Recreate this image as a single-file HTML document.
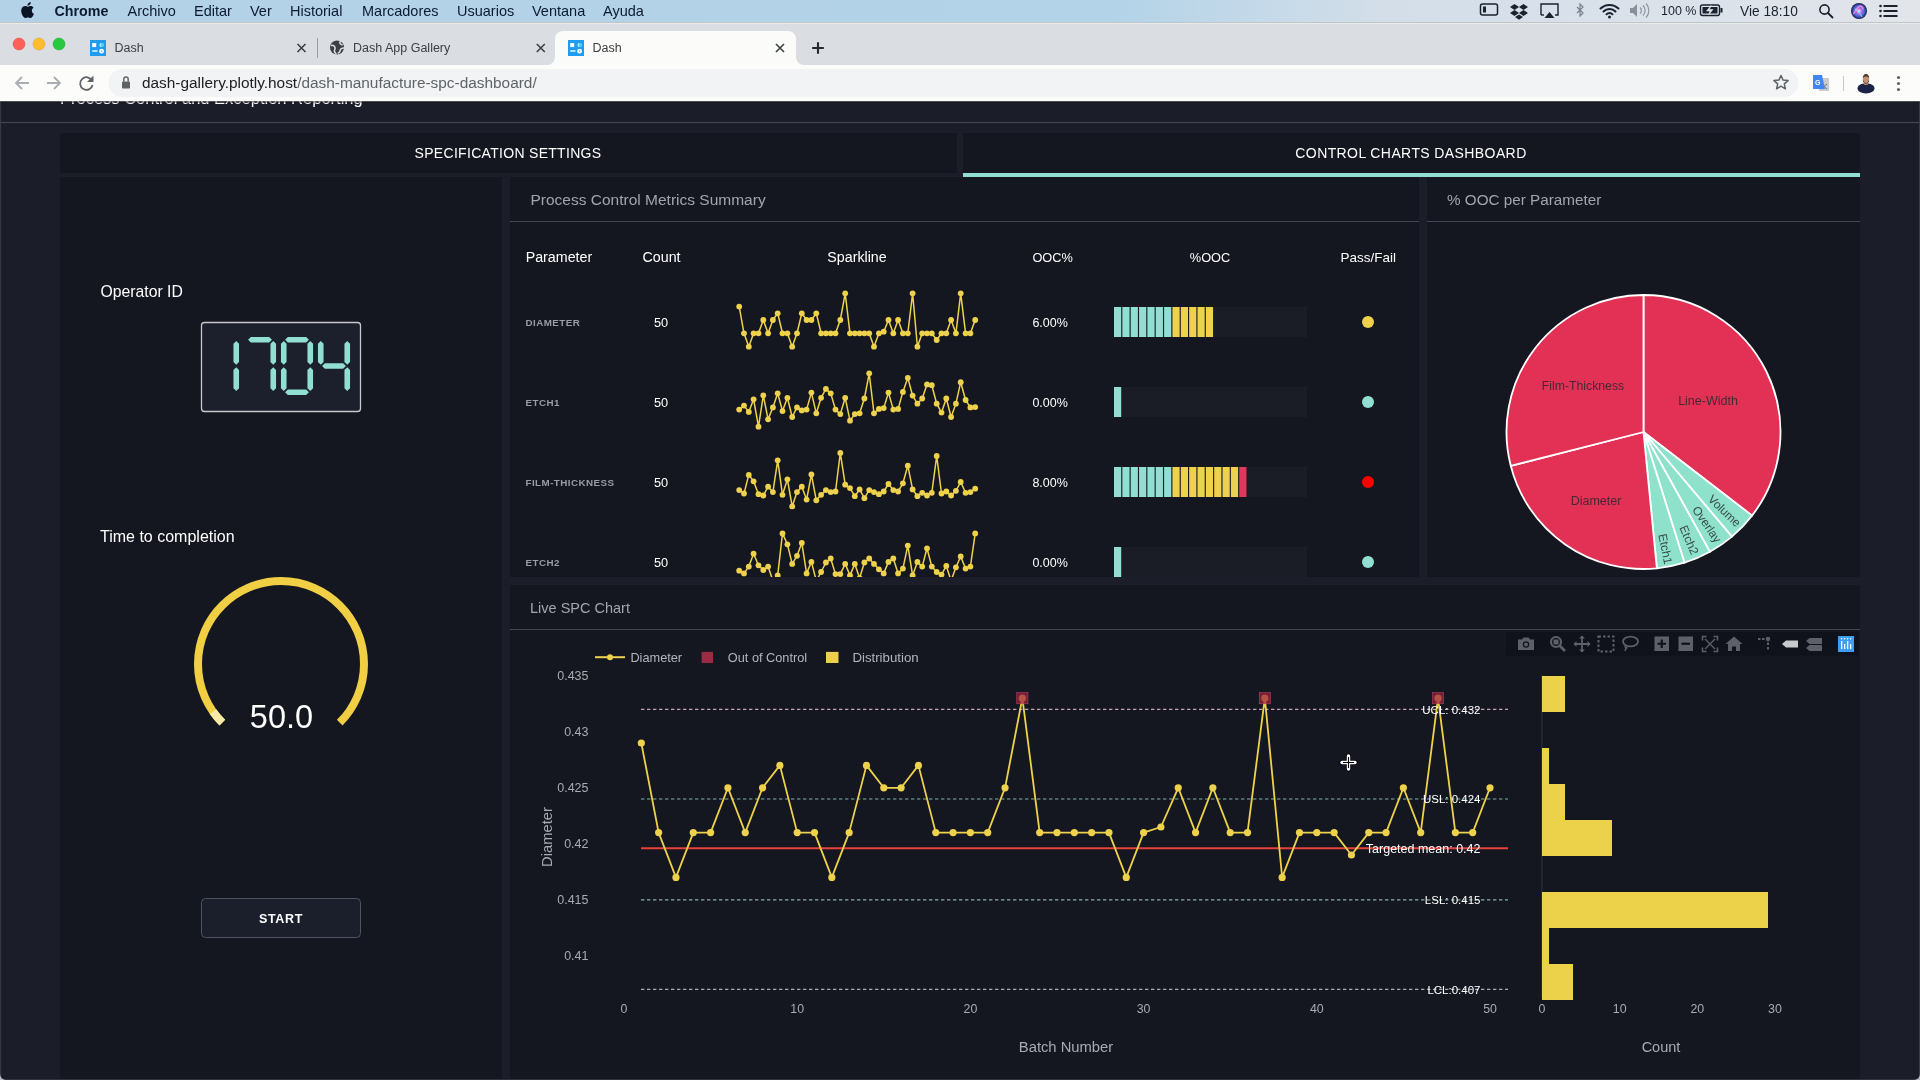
<!DOCTYPE html>
<html><head><meta charset="utf-8"><title>Dash</title>
<style>html,body{margin:0;padding:0;width:1920px;height:1080px;overflow:hidden;background:#1b1d28;}
svg{display:block;font-family:"Liberation Sans", sans-serif;will-change:transform;}</style></head>
<body><svg width="1920" height="1080" viewBox="0 0 1920 1080">
<rect x="0" y="101" width="1920" height="979" fill="#1b1d28"/>
<clipPath id="pg"><rect x="0" y="101" width="1920" height="979"/></clipPath>
<g clip-path="url(#pg)">
<text x="60" y="103.8" font-size="16.5" fill="#ffffff">Process Control and Exception Reporting</text>
</g>
<rect x="0" y="122" width="1920" height="1" fill="#454854"/>
<rect x="60" y="133" width="897" height="40" fill="#151720"/>
<rect x="963" y="133" width="897" height="40" fill="#151720"/>
<rect x="963" y="173" width="897" height="4" fill="#91dfd2"/>
<text x="508" y="158" font-size="14" fill="#ffffff" text-anchor="middle" letter-spacing="0.3">SPECIFICATION SETTINGS</text>
<text x="1411" y="158" font-size="14" fill="#ffffff" text-anchor="middle" letter-spacing="0.4">CONTROL CHARTS DASHBOARD</text>
<rect x="60" y="177" width="442" height="903" fill="#151720"/>
<rect x="510" y="177" width="909" height="400" fill="#151720"/>
<rect x="1427" y="177" width="433" height="400" fill="#151720"/>
<rect x="510" y="585" width="1350" height="495" fill="#151720"/>
<rect x="510" y="221" width="909" height="1" fill="#454854"/>
<rect x="1427" y="221" width="433" height="1" fill="#454854"/>
<rect x="510" y="629" width="1350" height="1" fill="#454854"/>
<text x="530.5" y="205" font-size="15.5" fill="#a2a5ad">Process Control Metrics Summary</text>
<text x="1447" y="205" font-size="15.25" fill="#a2a5ad">% OOC per Parameter</text>
<text x="530" y="613" font-size="14.5" fill="#a2a5ad">Live SPC Chart</text>
<rect x="1919" y="101" width="1" height="979" fill="#3a3d48"/>
<rect x="0" y="101" width="1.2" height="979" fill="#363944"/>
<rect x="0" y="1079" width="1920" height="1" fill="#30333d"/>
<path d="M0 1074v6h6a6 6 0 0 1 -6 -6z" fill="#b8bcc4"/><path d="M1920 1074v6h-6a6 6 0 0 0 6 -6z" fill="#b8bcc4"/>
<text x="100.5" y="296.5" font-size="15.75" fill="#ffffff">Operator ID</text>
<rect x="201.5" y="322.5" width="159" height="89" rx="3" fill="#1c1f2c" stroke="#c8c8cc" stroke-width="1.3"/>
<path d="M236.25 341.05l2.8 2.8V361.9l-2.8 2.8-2.8 -2.8V343.85z" fill="#91dfd2"/>
<path d="M236.25 367.3l2.8 2.8V388.15l-2.8 2.8-2.8 -2.8V370.1z" fill="#91dfd2"/>
<path d="M248.05 339.75l2.8 -2.8H269.15l2.8 2.8-2.8 2.8H250.85000000000002z" fill="#91dfd2"/>
<path d="M273.25 341.05l2.8 2.8V361.9l-2.8 2.8-2.8 -2.8V343.85z" fill="#91dfd2"/>
<path d="M273.25 367.3l2.8 2.8V388.15l-2.8 2.8-2.8 -2.8V370.1z" fill="#91dfd2"/>
<path d="M285.05 339.75l2.8 -2.8H306.15l2.8 2.8-2.8 2.8H287.85z" fill="#91dfd2"/>
<path d="M285.05 392.25l2.8 -2.8H306.15l2.8 2.8-2.8 2.8H287.85z" fill="#91dfd2"/>
<path d="M310.25 341.05l2.8 2.8V361.9l-2.8 2.8-2.8 -2.8V343.85z" fill="#91dfd2"/>
<path d="M310.25 367.3l2.8 2.8V388.15l-2.8 2.8-2.8 -2.8V370.1z" fill="#91dfd2"/>
<path d="M283.75 341.05l2.8 2.8V361.9l-2.8 2.8-2.8 -2.8V343.85z" fill="#91dfd2"/>
<path d="M283.75 367.3l2.8 2.8V388.15l-2.8 2.8-2.8 -2.8V370.1z" fill="#91dfd2"/>
<path d="M322.05 366.0l2.8 -2.8H343.15l2.8 2.8-2.8 2.8H324.85z" fill="#91dfd2"/>
<path d="M347.25 341.05l2.8 2.8V361.9l-2.8 2.8-2.8 -2.8V343.85z" fill="#91dfd2"/>
<path d="M347.25 367.3l2.8 2.8V388.15l-2.8 2.8-2.8 -2.8V370.1z" fill="#91dfd2"/>
<path d="M320.75 341.05l2.8 2.8V361.9l-2.8 2.8-2.8 -2.8V343.85z" fill="#91dfd2"/>
<text x="100" y="542.2" font-size="16" fill="#ffffff">Time to completion</text>
<path d="M222.31 722.69A83 83 0 1 1 339.69 722.69" fill="none" stroke="#f0cf45" stroke-width="8"/>
<path d="M222.31 722.69A83 83 0 0 1 213.01 711.61" fill="none" stroke="#f6eaa6" stroke-width="8"/>
<text x="281.5" y="727.8" font-size="32.5" fill="#ffffff" text-anchor="middle">50.0</text>
<rect x="201.5" y="898.5" width="159" height="39" rx="4" fill="#1b1e2b" stroke="#4e5362" stroke-width="1"/>
<text x="281" y="923" font-size="12.5" fill="#ffffff" text-anchor="middle" font-weight="bold" letter-spacing="0.66">START</text>
<text x="525.7" y="262.2" font-size="14.25" fill="#ffffff">Parameter</text>
<text x="642.5" y="262.2" font-size="14.25" fill="#ffffff">Count</text>
<text x="857" y="262.2" font-size="14.25" fill="#ffffff" text-anchor="middle">Sparkline</text>
<text x="1032.4" y="262.2" font-size="12.75" fill="#ffffff">OOC%</text>
<text x="1210" y="262.2" font-size="12.75" fill="#ffffff" text-anchor="middle">%OOC</text>
<text x="1340.4" y="262.2" font-size="13.5" fill="#ffffff">Pass/Fail</text>
<text x="525.5" y="326.2" font-size="9.8" fill="#9a9ca3" font-weight="bold" letter-spacing="0.45">DIAMETER</text>
<text x="661" y="326.5" font-size="12.75" fill="#ffffff" text-anchor="middle">50</text>
<text x="1032.4" y="326.5" font-size="12.5" fill="#ffffff">6.00%</text>
<rect x="1114" y="307" width="193" height="30" fill="#1a1c26"/>
<rect x="1114.00" y="307" width="7.2" height="30" fill="#91dfd2"/>
<rect x="1122.35" y="307" width="7.2" height="30" fill="#91dfd2"/>
<rect x="1130.70" y="307" width="7.2" height="30" fill="#91dfd2"/>
<rect x="1139.05" y="307" width="7.2" height="30" fill="#91dfd2"/>
<rect x="1147.40" y="307" width="7.2" height="30" fill="#91dfd2"/>
<rect x="1155.75" y="307" width="7.2" height="30" fill="#91dfd2"/>
<rect x="1164.10" y="307" width="7.2" height="30" fill="#91dfd2"/>
<rect x="1172.45" y="307" width="7.2" height="30" fill="#eed24c"/>
<rect x="1180.80" y="307" width="7.2" height="30" fill="#eed24c"/>
<rect x="1189.15" y="307" width="7.2" height="30" fill="#eed24c"/>
<rect x="1197.50" y="307" width="7.2" height="30" fill="#eed24c"/>
<rect x="1205.85" y="307" width="7.2" height="30" fill="#eed24c"/>
<circle cx="1368" cy="322" r="6" fill="#eed24c"/>
<text x="525.5" y="406.2" font-size="9.8" fill="#9a9ca3" font-weight="bold" letter-spacing="0.45">ETCH1</text>
<text x="661" y="406.5" font-size="12.75" fill="#ffffff" text-anchor="middle">50</text>
<text x="1032.4" y="406.5" font-size="12.5" fill="#ffffff">0.00%</text>
<rect x="1114" y="387" width="193" height="30" fill="#1a1c26"/>
<rect x="1114.00" y="387" width="7.2" height="30" fill="#91dfd2"/>
<circle cx="1368" cy="402" r="6" fill="#91dfd2"/>
<text x="525.5" y="486.2" font-size="9.8" fill="#9a9ca3" font-weight="bold" letter-spacing="0.45">FILM-THICKNESS</text>
<text x="661" y="486.5" font-size="12.75" fill="#ffffff" text-anchor="middle">50</text>
<text x="1032.4" y="486.5" font-size="12.5" fill="#ffffff">8.00%</text>
<rect x="1114" y="467" width="193" height="30" fill="#1a1c26"/>
<rect x="1114.00" y="467" width="7.2" height="30" fill="#91dfd2"/>
<rect x="1122.35" y="467" width="7.2" height="30" fill="#91dfd2"/>
<rect x="1130.70" y="467" width="7.2" height="30" fill="#91dfd2"/>
<rect x="1139.05" y="467" width="7.2" height="30" fill="#91dfd2"/>
<rect x="1147.40" y="467" width="7.2" height="30" fill="#91dfd2"/>
<rect x="1155.75" y="467" width="7.2" height="30" fill="#91dfd2"/>
<rect x="1164.10" y="467" width="7.2" height="30" fill="#91dfd2"/>
<rect x="1172.45" y="467" width="7.2" height="30" fill="#eed24c"/>
<rect x="1180.80" y="467" width="7.2" height="30" fill="#eed24c"/>
<rect x="1189.15" y="467" width="7.2" height="30" fill="#eed24c"/>
<rect x="1197.50" y="467" width="7.2" height="30" fill="#eed24c"/>
<rect x="1205.85" y="467" width="7.2" height="30" fill="#eed24c"/>
<rect x="1214.20" y="467" width="7.2" height="30" fill="#eed24c"/>
<rect x="1222.55" y="467" width="7.2" height="30" fill="#eed24c"/>
<rect x="1230.90" y="467" width="7.2" height="30" fill="#eed24c"/>
<rect x="1239.25" y="467" width="7.2" height="30" fill="#e0385a"/>
<circle cx="1368" cy="482" r="6" fill="#ff0000"/>
<text x="525.5" y="566.2" font-size="9.8" fill="#9a9ca3" font-weight="bold" letter-spacing="0.45">ETCH2</text>
<text x="661" y="566.5" font-size="12.75" fill="#ffffff" text-anchor="middle">50</text>
<text x="1032.4" y="566.5" font-size="12.5" fill="#ffffff">0.00%</text>
<rect x="1114" y="547" width="193" height="30" fill="#1a1c26"/>
<rect x="1114.00" y="547" width="7.2" height="30" fill="#91dfd2"/>
<circle cx="1368" cy="562" r="6" fill="#91dfd2"/>
<clipPath id="tblclip"><rect x="510" y="222" width="909" height="355"/></clipPath><g clip-path="url(#tblclip)">
<polyline points="739.2,306.6 744.0,333.3 748.8,346.7 753.6,333.3 758.5,333.3 763.3,320.0 768.1,333.3 772.9,320.0 777.7,313.3 782.5,333.3 787.4,333.3 792.2,346.7 797.0,333.3 801.8,313.3 806.6,320.0 811.4,320.0 816.3,313.3 821.1,333.3 825.9,333.3 830.7,333.3 835.5,333.3 840.3,320.0 845.2,293.3 850.0,333.3 854.8,333.3 859.6,333.3 864.4,333.3 869.2,333.3 874.0,346.7 878.9,333.3 883.7,331.7 888.5,320.0 893.3,333.3 898.1,320.0 902.9,333.3 907.8,333.3 912.6,293.3 917.4,346.7 922.2,333.3 927.0,333.3 931.8,333.3 936.7,340.0 941.5,333.3 946.3,333.3 951.1,320.0 955.9,333.3 960.7,293.3 965.6,333.3 970.4,333.3 975.2,320.0" fill="none" stroke="#eed24c" stroke-width="1.5" stroke-linejoin="round"/>
<circle cx="739.2" cy="306.6" r="2.9" fill="#eed24c"/><circle cx="744.0" cy="333.3" r="2.9" fill="#eed24c"/><circle cx="748.8" cy="346.7" r="2.9" fill="#eed24c"/><circle cx="753.6" cy="333.3" r="2.9" fill="#eed24c"/><circle cx="758.5" cy="333.3" r="2.9" fill="#eed24c"/><circle cx="763.3" cy="320.0" r="2.9" fill="#eed24c"/><circle cx="768.1" cy="333.3" r="2.9" fill="#eed24c"/><circle cx="772.9" cy="320.0" r="2.9" fill="#eed24c"/><circle cx="777.7" cy="313.3" r="2.9" fill="#eed24c"/><circle cx="782.5" cy="333.3" r="2.9" fill="#eed24c"/><circle cx="787.4" cy="333.3" r="2.9" fill="#eed24c"/><circle cx="792.2" cy="346.7" r="2.9" fill="#eed24c"/><circle cx="797.0" cy="333.3" r="2.9" fill="#eed24c"/><circle cx="801.8" cy="313.3" r="2.9" fill="#eed24c"/><circle cx="806.6" cy="320.0" r="2.9" fill="#eed24c"/><circle cx="811.4" cy="320.0" r="2.9" fill="#eed24c"/><circle cx="816.3" cy="313.3" r="2.9" fill="#eed24c"/><circle cx="821.1" cy="333.3" r="2.9" fill="#eed24c"/><circle cx="825.9" cy="333.3" r="2.9" fill="#eed24c"/><circle cx="830.7" cy="333.3" r="2.9" fill="#eed24c"/><circle cx="835.5" cy="333.3" r="2.9" fill="#eed24c"/><circle cx="840.3" cy="320.0" r="2.9" fill="#eed24c"/><circle cx="845.2" cy="293.3" r="2.9" fill="#eed24c"/><circle cx="850.0" cy="333.3" r="2.9" fill="#eed24c"/><circle cx="854.8" cy="333.3" r="2.9" fill="#eed24c"/><circle cx="859.6" cy="333.3" r="2.9" fill="#eed24c"/><circle cx="864.4" cy="333.3" r="2.9" fill="#eed24c"/><circle cx="869.2" cy="333.3" r="2.9" fill="#eed24c"/><circle cx="874.0" cy="346.7" r="2.9" fill="#eed24c"/><circle cx="878.9" cy="333.3" r="2.9" fill="#eed24c"/><circle cx="883.7" cy="331.7" r="2.9" fill="#eed24c"/><circle cx="888.5" cy="320.0" r="2.9" fill="#eed24c"/><circle cx="893.3" cy="333.3" r="2.9" fill="#eed24c"/><circle cx="898.1" cy="320.0" r="2.9" fill="#eed24c"/><circle cx="902.9" cy="333.3" r="2.9" fill="#eed24c"/><circle cx="907.8" cy="333.3" r="2.9" fill="#eed24c"/><circle cx="912.6" cy="293.3" r="2.9" fill="#eed24c"/><circle cx="917.4" cy="346.7" r="2.9" fill="#eed24c"/><circle cx="922.2" cy="333.3" r="2.9" fill="#eed24c"/><circle cx="927.0" cy="333.3" r="2.9" fill="#eed24c"/><circle cx="931.8" cy="333.3" r="2.9" fill="#eed24c"/><circle cx="936.7" cy="340.0" r="2.9" fill="#eed24c"/><circle cx="941.5" cy="333.3" r="2.9" fill="#eed24c"/><circle cx="946.3" cy="333.3" r="2.9" fill="#eed24c"/><circle cx="951.1" cy="320.0" r="2.9" fill="#eed24c"/><circle cx="955.9" cy="333.3" r="2.9" fill="#eed24c"/><circle cx="960.7" cy="293.3" r="2.9" fill="#eed24c"/><circle cx="965.6" cy="333.3" r="2.9" fill="#eed24c"/><circle cx="970.4" cy="333.3" r="2.9" fill="#eed24c"/><circle cx="975.2" cy="320.0" r="2.9" fill="#eed24c"/>
<polyline points="739.2,409.6 744.0,405.6 748.8,411.9 753.6,399.3 758.5,426.7 763.3,395.3 768.1,419.3 772.9,407.4 777.7,393.3 782.5,411.1 787.4,397.8 792.2,417.0 797.0,407.4 801.8,410.4 806.6,409.6 811.4,392.6 816.3,413.3 821.1,397.8 825.9,388.9 830.7,393.3 835.5,409.6 840.3,414.1 845.2,397.8 850.0,420.7 854.8,414.1 859.6,413.3 864.4,398.5 869.2,373.3 874.0,413.3 878.9,408.9 883.7,408.1 888.5,392.6 893.3,409.6 898.1,408.9 902.9,391.9 907.8,377.8 912.6,395.6 917.4,403.7 922.2,398.5 927.0,384.4 931.8,385.2 936.7,403.7 941.5,412.6 946.3,398.5 951.1,417.0 955.9,403.7 960.7,382.2 965.6,400.0 970.4,407.4 975.2,407.1" fill="none" stroke="#eed24c" stroke-width="1.5" stroke-linejoin="round"/>
<circle cx="739.2" cy="409.6" r="2.9" fill="#eed24c"/><circle cx="744.0" cy="405.6" r="2.9" fill="#eed24c"/><circle cx="748.8" cy="411.9" r="2.9" fill="#eed24c"/><circle cx="753.6" cy="399.3" r="2.9" fill="#eed24c"/><circle cx="758.5" cy="426.7" r="2.9" fill="#eed24c"/><circle cx="763.3" cy="395.3" r="2.9" fill="#eed24c"/><circle cx="768.1" cy="419.3" r="2.9" fill="#eed24c"/><circle cx="772.9" cy="407.4" r="2.9" fill="#eed24c"/><circle cx="777.7" cy="393.3" r="2.9" fill="#eed24c"/><circle cx="782.5" cy="411.1" r="2.9" fill="#eed24c"/><circle cx="787.4" cy="397.8" r="2.9" fill="#eed24c"/><circle cx="792.2" cy="417.0" r="2.9" fill="#eed24c"/><circle cx="797.0" cy="407.4" r="2.9" fill="#eed24c"/><circle cx="801.8" cy="410.4" r="2.9" fill="#eed24c"/><circle cx="806.6" cy="409.6" r="2.9" fill="#eed24c"/><circle cx="811.4" cy="392.6" r="2.9" fill="#eed24c"/><circle cx="816.3" cy="413.3" r="2.9" fill="#eed24c"/><circle cx="821.1" cy="397.8" r="2.9" fill="#eed24c"/><circle cx="825.9" cy="388.9" r="2.9" fill="#eed24c"/><circle cx="830.7" cy="393.3" r="2.9" fill="#eed24c"/><circle cx="835.5" cy="409.6" r="2.9" fill="#eed24c"/><circle cx="840.3" cy="414.1" r="2.9" fill="#eed24c"/><circle cx="845.2" cy="397.8" r="2.9" fill="#eed24c"/><circle cx="850.0" cy="420.7" r="2.9" fill="#eed24c"/><circle cx="854.8" cy="414.1" r="2.9" fill="#eed24c"/><circle cx="859.6" cy="413.3" r="2.9" fill="#eed24c"/><circle cx="864.4" cy="398.5" r="2.9" fill="#eed24c"/><circle cx="869.2" cy="373.3" r="2.9" fill="#eed24c"/><circle cx="874.0" cy="413.3" r="2.9" fill="#eed24c"/><circle cx="878.9" cy="408.9" r="2.9" fill="#eed24c"/><circle cx="883.7" cy="408.1" r="2.9" fill="#eed24c"/><circle cx="888.5" cy="392.6" r="2.9" fill="#eed24c"/><circle cx="893.3" cy="409.6" r="2.9" fill="#eed24c"/><circle cx="898.1" cy="408.9" r="2.9" fill="#eed24c"/><circle cx="902.9" cy="391.9" r="2.9" fill="#eed24c"/><circle cx="907.8" cy="377.8" r="2.9" fill="#eed24c"/><circle cx="912.6" cy="395.6" r="2.9" fill="#eed24c"/><circle cx="917.4" cy="403.7" r="2.9" fill="#eed24c"/><circle cx="922.2" cy="398.5" r="2.9" fill="#eed24c"/><circle cx="927.0" cy="384.4" r="2.9" fill="#eed24c"/><circle cx="931.8" cy="385.2" r="2.9" fill="#eed24c"/><circle cx="936.7" cy="403.7" r="2.9" fill="#eed24c"/><circle cx="941.5" cy="412.6" r="2.9" fill="#eed24c"/><circle cx="946.3" cy="398.5" r="2.9" fill="#eed24c"/><circle cx="951.1" cy="417.0" r="2.9" fill="#eed24c"/><circle cx="955.9" cy="403.7" r="2.9" fill="#eed24c"/><circle cx="960.7" cy="382.2" r="2.9" fill="#eed24c"/><circle cx="965.6" cy="400.0" r="2.9" fill="#eed24c"/><circle cx="970.4" cy="407.4" r="2.9" fill="#eed24c"/><circle cx="975.2" cy="407.1" r="2.9" fill="#eed24c"/>
<polyline points="739.2,490.1 744.0,493.5 748.8,474.9 753.6,481.3 758.5,494.2 763.3,495.5 768.1,486.7 772.9,492.1 777.7,460.3 782.5,494.8 787.4,479.3 792.2,506.4 797.0,492.1 801.8,486.7 806.6,499.6 811.4,474.5 816.3,500.3 821.1,494.8 825.9,490.1 830.7,492.1 835.5,491.5 840.3,452.9 845.2,484.7 850.0,488.1 854.8,496.2 859.6,489.4 864.4,498.2 869.2,490.1 874.0,492.1 878.9,494.2 883.7,491.5 888.5,484.0 893.3,490.1 898.1,491.5 902.9,483.3 907.8,465.7 912.6,489.4 917.4,496.2 922.2,492.8 927.0,495.5 931.8,492.8 936.7,456.0 941.5,493.5 946.3,491.5 951.1,495.5 955.9,490.8 960.7,482.0 965.6,492.8 970.4,492.1 975.2,488.7" fill="none" stroke="#eed24c" stroke-width="1.5" stroke-linejoin="round"/>
<circle cx="739.2" cy="490.1" r="2.9" fill="#eed24c"/><circle cx="744.0" cy="493.5" r="2.9" fill="#eed24c"/><circle cx="748.8" cy="474.9" r="2.9" fill="#eed24c"/><circle cx="753.6" cy="481.3" r="2.9" fill="#eed24c"/><circle cx="758.5" cy="494.2" r="2.9" fill="#eed24c"/><circle cx="763.3" cy="495.5" r="2.9" fill="#eed24c"/><circle cx="768.1" cy="486.7" r="2.9" fill="#eed24c"/><circle cx="772.9" cy="492.1" r="2.9" fill="#eed24c"/><circle cx="777.7" cy="460.3" r="2.9" fill="#eed24c"/><circle cx="782.5" cy="494.8" r="2.9" fill="#eed24c"/><circle cx="787.4" cy="479.3" r="2.9" fill="#eed24c"/><circle cx="792.2" cy="506.4" r="2.9" fill="#eed24c"/><circle cx="797.0" cy="492.1" r="2.9" fill="#eed24c"/><circle cx="801.8" cy="486.7" r="2.9" fill="#eed24c"/><circle cx="806.6" cy="499.6" r="2.9" fill="#eed24c"/><circle cx="811.4" cy="474.5" r="2.9" fill="#eed24c"/><circle cx="816.3" cy="500.3" r="2.9" fill="#eed24c"/><circle cx="821.1" cy="494.8" r="2.9" fill="#eed24c"/><circle cx="825.9" cy="490.1" r="2.9" fill="#eed24c"/><circle cx="830.7" cy="492.1" r="2.9" fill="#eed24c"/><circle cx="835.5" cy="491.5" r="2.9" fill="#eed24c"/><circle cx="840.3" cy="452.9" r="2.9" fill="#eed24c"/><circle cx="845.2" cy="484.7" r="2.9" fill="#eed24c"/><circle cx="850.0" cy="488.1" r="2.9" fill="#eed24c"/><circle cx="854.8" cy="496.2" r="2.9" fill="#eed24c"/><circle cx="859.6" cy="489.4" r="2.9" fill="#eed24c"/><circle cx="864.4" cy="498.2" r="2.9" fill="#eed24c"/><circle cx="869.2" cy="490.1" r="2.9" fill="#eed24c"/><circle cx="874.0" cy="492.1" r="2.9" fill="#eed24c"/><circle cx="878.9" cy="494.2" r="2.9" fill="#eed24c"/><circle cx="883.7" cy="491.5" r="2.9" fill="#eed24c"/><circle cx="888.5" cy="484.0" r="2.9" fill="#eed24c"/><circle cx="893.3" cy="490.1" r="2.9" fill="#eed24c"/><circle cx="898.1" cy="491.5" r="2.9" fill="#eed24c"/><circle cx="902.9" cy="483.3" r="2.9" fill="#eed24c"/><circle cx="907.8" cy="465.7" r="2.9" fill="#eed24c"/><circle cx="912.6" cy="489.4" r="2.9" fill="#eed24c"/><circle cx="917.4" cy="496.2" r="2.9" fill="#eed24c"/><circle cx="922.2" cy="492.8" r="2.9" fill="#eed24c"/><circle cx="927.0" cy="495.5" r="2.9" fill="#eed24c"/><circle cx="931.8" cy="492.8" r="2.9" fill="#eed24c"/><circle cx="936.7" cy="456.0" r="2.9" fill="#eed24c"/><circle cx="941.5" cy="493.5" r="2.9" fill="#eed24c"/><circle cx="946.3" cy="491.5" r="2.9" fill="#eed24c"/><circle cx="951.1" cy="495.5" r="2.9" fill="#eed24c"/><circle cx="955.9" cy="490.8" r="2.9" fill="#eed24c"/><circle cx="960.7" cy="482.0" r="2.9" fill="#eed24c"/><circle cx="965.6" cy="492.8" r="2.9" fill="#eed24c"/><circle cx="970.4" cy="492.1" r="2.9" fill="#eed24c"/><circle cx="975.2" cy="488.7" r="2.9" fill="#eed24c"/>
<polyline points="739.2,570.7 744.0,573.4 748.8,566.6 753.6,553.7 758.5,565.3 763.3,570.0 768.1,566.6 772.9,580.8 777.7,575.4 782.5,533.4 787.4,544.3 792.2,563.9 797.0,555.8 801.8,542.9 806.6,573.4 811.4,561.9 816.3,580.8 821.1,572.0 825.9,562.5 830.7,558.5 835.5,574.1 840.3,574.1 845.2,563.9 850.0,575.4 854.8,563.9 859.6,578.1 864.4,562.5 869.2,558.5 874.0,563.9 878.9,569.3 883.7,573.4 888.5,561.9 893.3,558.5 898.1,573.4 902.9,568.6 907.8,545.6 912.6,575.4 917.4,561.9 922.2,566.6 927.0,548.3 931.8,566.6 936.7,572.0 941.5,574.7 946.3,565.9 951.1,580.8 955.9,567.3 960.7,556.5 965.6,568.6 970.4,566.6 975.2,533.4" fill="none" stroke="#eed24c" stroke-width="1.5" stroke-linejoin="round"/>
<circle cx="739.2" cy="570.7" r="2.9" fill="#eed24c"/><circle cx="744.0" cy="573.4" r="2.9" fill="#eed24c"/><circle cx="748.8" cy="566.6" r="2.9" fill="#eed24c"/><circle cx="753.6" cy="553.7" r="2.9" fill="#eed24c"/><circle cx="758.5" cy="565.3" r="2.9" fill="#eed24c"/><circle cx="763.3" cy="570.0" r="2.9" fill="#eed24c"/><circle cx="768.1" cy="566.6" r="2.9" fill="#eed24c"/><circle cx="772.9" cy="580.8" r="2.9" fill="#eed24c"/><circle cx="777.7" cy="575.4" r="2.9" fill="#eed24c"/><circle cx="782.5" cy="533.4" r="2.9" fill="#eed24c"/><circle cx="787.4" cy="544.3" r="2.9" fill="#eed24c"/><circle cx="792.2" cy="563.9" r="2.9" fill="#eed24c"/><circle cx="797.0" cy="555.8" r="2.9" fill="#eed24c"/><circle cx="801.8" cy="542.9" r="2.9" fill="#eed24c"/><circle cx="806.6" cy="573.4" r="2.9" fill="#eed24c"/><circle cx="811.4" cy="561.9" r="2.9" fill="#eed24c"/><circle cx="816.3" cy="580.8" r="2.9" fill="#eed24c"/><circle cx="821.1" cy="572.0" r="2.9" fill="#eed24c"/><circle cx="825.9" cy="562.5" r="2.9" fill="#eed24c"/><circle cx="830.7" cy="558.5" r="2.9" fill="#eed24c"/><circle cx="835.5" cy="574.1" r="2.9" fill="#eed24c"/><circle cx="840.3" cy="574.1" r="2.9" fill="#eed24c"/><circle cx="845.2" cy="563.9" r="2.9" fill="#eed24c"/><circle cx="850.0" cy="575.4" r="2.9" fill="#eed24c"/><circle cx="854.8" cy="563.9" r="2.9" fill="#eed24c"/><circle cx="859.6" cy="578.1" r="2.9" fill="#eed24c"/><circle cx="864.4" cy="562.5" r="2.9" fill="#eed24c"/><circle cx="869.2" cy="558.5" r="2.9" fill="#eed24c"/><circle cx="874.0" cy="563.9" r="2.9" fill="#eed24c"/><circle cx="878.9" cy="569.3" r="2.9" fill="#eed24c"/><circle cx="883.7" cy="573.4" r="2.9" fill="#eed24c"/><circle cx="888.5" cy="561.9" r="2.9" fill="#eed24c"/><circle cx="893.3" cy="558.5" r="2.9" fill="#eed24c"/><circle cx="898.1" cy="573.4" r="2.9" fill="#eed24c"/><circle cx="902.9" cy="568.6" r="2.9" fill="#eed24c"/><circle cx="907.8" cy="545.6" r="2.9" fill="#eed24c"/><circle cx="912.6" cy="575.4" r="2.9" fill="#eed24c"/><circle cx="917.4" cy="561.9" r="2.9" fill="#eed24c"/><circle cx="922.2" cy="566.6" r="2.9" fill="#eed24c"/><circle cx="927.0" cy="548.3" r="2.9" fill="#eed24c"/><circle cx="931.8" cy="566.6" r="2.9" fill="#eed24c"/><circle cx="936.7" cy="572.0" r="2.9" fill="#eed24c"/><circle cx="941.5" cy="574.7" r="2.9" fill="#eed24c"/><circle cx="946.3" cy="565.9" r="2.9" fill="#eed24c"/><circle cx="951.1" cy="580.8" r="2.9" fill="#eed24c"/><circle cx="955.9" cy="567.3" r="2.9" fill="#eed24c"/><circle cx="960.7" cy="556.5" r="2.9" fill="#eed24c"/><circle cx="965.6" cy="568.6" r="2.9" fill="#eed24c"/><circle cx="970.4" cy="566.6" r="2.9" fill="#eed24c"/><circle cx="975.2" cy="533.4" r="2.9" fill="#eed24c"/>
</g>
<path d="M1643.5 432L1643.50 295.00A137 137 0 0 1 1752.04 515.59z" fill="#e23155" stroke="#ffffff" stroke-width="1.8" stroke-linejoin="round"/>
<path d="M1643.5 432L1752.04 515.59A137 137 0 0 1 1731.93 536.64z" fill="#8ee2cc" stroke="#ffffff" stroke-width="1.8" stroke-linejoin="round"/>
<path d="M1643.5 432L1731.93 536.64A137 137 0 0 1 1709.92 551.82z" fill="#8ee2cc" stroke="#ffffff" stroke-width="1.8" stroke-linejoin="round"/>
<path d="M1643.5 432L1709.92 551.82A137 137 0 0 1 1684.47 562.73z" fill="#8ee2cc" stroke="#ffffff" stroke-width="1.8" stroke-linejoin="round"/>
<path d="M1643.5 432L1684.47 562.73A137 137 0 0 1 1656.87 568.35z" fill="#8ee2cc" stroke="#ffffff" stroke-width="1.8" stroke-linejoin="round"/>
<path d="M1643.5 432L1656.87 568.35A137 137 0 0 1 1510.74 465.84z" fill="#e23155" stroke="#ffffff" stroke-width="1.8" stroke-linejoin="round"/>
<path d="M1643.5 432L1510.74 465.84A137 137 0 0 1 1643.50 295.00z" fill="#e23155" stroke="#ffffff" stroke-width="1.8" stroke-linejoin="round"/>
<text x="1583" y="390" font-size="12.25" fill="#26262e" fill-opacity="0.82" text-anchor="middle">Film-Thickness</text>
<text x="1708" y="405" font-size="12.5" fill="#26262e" fill-opacity="0.82" text-anchor="middle">Line-Width</text>
<text x="1596" y="504.5" font-size="12.5" fill="#26262e" fill-opacity="0.82" text-anchor="middle">Diameter</text>
<g transform="translate(1724.4,511) rotate(43.7)"><text x="0" y="4" font-size="12" fill="#26262e" fill-opacity="0.82" text-anchor="middle">Volume</text></g>
<g transform="translate(1706.7,524.4) rotate(55.4)"><text x="0" y="4" font-size="12" fill="#26262e" fill-opacity="0.82" text-anchor="middle">Overlay</text></g>
<g transform="translate(1688.9,540) rotate(66.8)"><text x="0" y="4" font-size="12" fill="#26262e" fill-opacity="0.82" text-anchor="middle">Etch2</text></g>
<g transform="translate(1665.3,548.9) rotate(78.5)"><text x="0" y="4" font-size="12" fill="#26262e" fill-opacity="0.82" text-anchor="middle">Etch1</text></g>
<path d="M595 657.2h30" stroke="#eed24c" stroke-width="2"/><circle cx="610" cy="657.2" r="3" fill="#eed24c"/>
<text x="630.4" y="662.1" font-size="12.75" fill="#b3b5bb">Diameter</text>
<rect x="701.6" y="651.9" width="11.4" height="11.1" fill="#9a2b45"/>
<text x="727.8" y="662.1" font-size="12.75" fill="#b3b5bb">Out of Control</text>
<rect x="826" y="651.9" width="12.5" height="11.1" fill="#efd04b"/>
<text x="852.4" y="662.1" font-size="13.25" fill="#b3b5bb">Distribution</text>
<text x="588.5" y="680.2999999999998" font-size="12.5" fill="#a9abb1" text-anchor="end">0.435</text>
<text x="588.5" y="736.2999999999998" font-size="12.5" fill="#a9abb1" text-anchor="end">0.43</text>
<text x="588.5" y="792.3" font-size="12.5" fill="#a9abb1" text-anchor="end">0.425</text>
<text x="588.5" y="848.3" font-size="12.5" fill="#a9abb1" text-anchor="end">0.42</text>
<text x="588.5" y="904.3" font-size="12.5" fill="#a9abb1" text-anchor="end">0.415</text>
<text x="588.5" y="960.3000000000001" font-size="12.5" fill="#a9abb1" text-anchor="end">0.41</text>
<text x="624.0" y="1013.2" font-size="12.375000000000002" fill="#a9abb1" text-anchor="middle">0</text>
<text x="797.2" y="1013.2" font-size="12.375000000000002" fill="#a9abb1" text-anchor="middle">10</text>
<text x="970.4" y="1013.2" font-size="12.375000000000002" fill="#a9abb1" text-anchor="middle">20</text>
<text x="1143.6" y="1013.2" font-size="12.375000000000002" fill="#a9abb1" text-anchor="middle">30</text>
<text x="1316.8" y="1013.2" font-size="12.375000000000002" fill="#a9abb1" text-anchor="middle">40</text>
<text x="1490.0" y="1013.2" font-size="12.375000000000002" fill="#a9abb1" text-anchor="middle">50</text>
<g transform="translate(552.3,837) rotate(-90)"><text x="0" y="0" font-size="14.75" fill="#a9abb1" text-anchor="middle">Diameter</text></g>
<text x="1066" y="1051.8" font-size="14.75" fill="#a9abb1" text-anchor="middle">Batch Number</text>
<path d="M641 709.4H1508" stroke="#bfa5b5" stroke-width="1.2" stroke-dasharray="3.4 2.6"/>
<path d="M641 799.0H1508" stroke="#86aeaa" stroke-width="1.2" stroke-dasharray="3.4 2.6"/>
<path d="M641 899.8H1508" stroke="#86aeaa" stroke-width="1.2" stroke-dasharray="3.4 2.6"/>
<path d="M641 989.4H1508" stroke="#a8abb2" stroke-width="1.2" stroke-dasharray="3.4 2.6"/>
<path d="M641 848.2H1508" stroke="#e8413a" stroke-width="2"/>
<polyline points="641.32,743.00 658.64,832.60 675.96,877.40 693.28,832.60 710.60,832.60 727.92,787.80 745.24,832.60 762.56,787.80 779.88,765.40 797.20,832.60 814.52,832.60 831.84,877.40 849.16,832.60 866.48,765.40 883.80,787.80 901.12,787.80 918.44,765.40 935.76,832.60 953.08,832.60 970.40,832.60 987.72,832.60 1005.04,787.80 1022.36,698.20 1039.68,832.60 1057.00,832.60 1074.32,832.60 1091.64,832.60 1108.96,832.60 1126.28,877.40 1143.60,832.60 1160.92,827.00 1178.24,787.80 1195.56,832.60 1212.88,787.80 1230.20,832.60 1247.52,832.60 1264.84,698.20 1282.16,877.40 1299.48,832.60 1316.80,832.60 1334.12,832.60 1351.44,855.00 1368.76,832.60 1386.08,832.60 1403.40,787.80 1420.72,832.60 1438.04,698.20 1455.36,832.60 1472.68,832.60 1490.00,787.80" fill="none" stroke="#eed24c" stroke-width="1.8" stroke-linejoin="round"/>
<circle cx="641.32" cy="743.00" r="3.6" fill="#eed24c"/><circle cx="658.64" cy="832.60" r="3.6" fill="#eed24c"/><circle cx="675.96" cy="877.40" r="3.6" fill="#eed24c"/><circle cx="693.28" cy="832.60" r="3.6" fill="#eed24c"/><circle cx="710.60" cy="832.60" r="3.6" fill="#eed24c"/><circle cx="727.92" cy="787.80" r="3.6" fill="#eed24c"/><circle cx="745.24" cy="832.60" r="3.6" fill="#eed24c"/><circle cx="762.56" cy="787.80" r="3.6" fill="#eed24c"/><circle cx="779.88" cy="765.40" r="3.6" fill="#eed24c"/><circle cx="797.20" cy="832.60" r="3.6" fill="#eed24c"/><circle cx="814.52" cy="832.60" r="3.6" fill="#eed24c"/><circle cx="831.84" cy="877.40" r="3.6" fill="#eed24c"/><circle cx="849.16" cy="832.60" r="3.6" fill="#eed24c"/><circle cx="866.48" cy="765.40" r="3.6" fill="#eed24c"/><circle cx="883.80" cy="787.80" r="3.6" fill="#eed24c"/><circle cx="901.12" cy="787.80" r="3.6" fill="#eed24c"/><circle cx="918.44" cy="765.40" r="3.6" fill="#eed24c"/><circle cx="935.76" cy="832.60" r="3.6" fill="#eed24c"/><circle cx="953.08" cy="832.60" r="3.6" fill="#eed24c"/><circle cx="970.40" cy="832.60" r="3.6" fill="#eed24c"/><circle cx="987.72" cy="832.60" r="3.6" fill="#eed24c"/><circle cx="1005.04" cy="787.80" r="3.6" fill="#eed24c"/><circle cx="1022.36" cy="698.20" r="3.6" fill="#eed24c"/><circle cx="1039.68" cy="832.60" r="3.6" fill="#eed24c"/><circle cx="1057.00" cy="832.60" r="3.6" fill="#eed24c"/><circle cx="1074.32" cy="832.60" r="3.6" fill="#eed24c"/><circle cx="1091.64" cy="832.60" r="3.6" fill="#eed24c"/><circle cx="1108.96" cy="832.60" r="3.6" fill="#eed24c"/><circle cx="1126.28" cy="877.40" r="3.6" fill="#eed24c"/><circle cx="1143.60" cy="832.60" r="3.6" fill="#eed24c"/><circle cx="1160.92" cy="827.00" r="3.6" fill="#eed24c"/><circle cx="1178.24" cy="787.80" r="3.6" fill="#eed24c"/><circle cx="1195.56" cy="832.60" r="3.6" fill="#eed24c"/><circle cx="1212.88" cy="787.80" r="3.6" fill="#eed24c"/><circle cx="1230.20" cy="832.60" r="3.6" fill="#eed24c"/><circle cx="1247.52" cy="832.60" r="3.6" fill="#eed24c"/><circle cx="1264.84" cy="698.20" r="3.6" fill="#eed24c"/><circle cx="1282.16" cy="877.40" r="3.6" fill="#eed24c"/><circle cx="1299.48" cy="832.60" r="3.6" fill="#eed24c"/><circle cx="1316.80" cy="832.60" r="3.6" fill="#eed24c"/><circle cx="1334.12" cy="832.60" r="3.6" fill="#eed24c"/><circle cx="1351.44" cy="855.00" r="3.6" fill="#eed24c"/><circle cx="1368.76" cy="832.60" r="3.6" fill="#eed24c"/><circle cx="1386.08" cy="832.60" r="3.6" fill="#eed24c"/><circle cx="1403.40" cy="787.80" r="3.6" fill="#eed24c"/><circle cx="1420.72" cy="832.60" r="3.6" fill="#eed24c"/><circle cx="1438.04" cy="698.20" r="3.6" fill="#eed24c"/><circle cx="1455.36" cy="832.60" r="3.6" fill="#eed24c"/><circle cx="1472.68" cy="832.60" r="3.6" fill="#eed24c"/><circle cx="1490.00" cy="787.80" r="3.6" fill="#eed24c"/>
<rect x="1016.76" y="692.60" width="11.2" height="11.2" fill="#a0203f" fill-opacity="0.72" stroke="#b04060" stroke-width="0.6"/>
<rect x="1259.24" y="692.60" width="11.2" height="11.2" fill="#a0203f" fill-opacity="0.72" stroke="#b04060" stroke-width="0.6"/>
<rect x="1432.44" y="692.60" width="11.2" height="11.2" fill="#a0203f" fill-opacity="0.72" stroke="#b04060" stroke-width="0.6"/>
<text x="1480.5" y="713.6999999999998" font-size="11.5" fill="#ffffff" text-anchor="end">UCL: 0.432</text>
<text x="1480.5" y="803.2999999999998" font-size="11.5" fill="#ffffff" text-anchor="end">USL: 0.424</text>
<text x="1480.5" y="852.5" font-size="12.5" fill="#ffffff" text-anchor="end">Targeted mean: 0.42</text>
<text x="1480.5" y="904.0999999999999" font-size="11.5" fill="#ffffff" text-anchor="end">LSL: 0.415</text>
<text x="1480.5" y="993.7" font-size="11.5" fill="#ffffff" text-anchor="end">LCL:0.407</text>
<rect x="1541.5" y="675" width="0.8" height="324" fill="#3a3e4a"/>
<path d="M1541.6 675.50H1565.00V711.50H1541.6zM1541.6 747.50H1549.40V783.50H1541.6zM1541.6 783.50H1565.00V819.50H1541.6zM1541.6 819.50H1611.80V856.00H1541.6zM1541.6 892.00H1767.80V927.70H1541.6zM1541.6 927.70H1549.40V963.80H1541.6zM1541.6 963.80H1572.80V999.90H1541.6z" fill="#ecd14a" shape-rendering="crispEdges"/>
<text x="1542.0" y="1013.2" font-size="12.4" fill="#a9abb1" text-anchor="middle">0</text>
<text x="1619.67" y="1013.2" font-size="12.4" fill="#a9abb1" text-anchor="middle">10</text>
<text x="1697.34" y="1013.2" font-size="12.4" fill="#a9abb1" text-anchor="middle">20</text>
<text x="1775.01" y="1013.2" font-size="12.4" fill="#a9abb1" text-anchor="middle">30</text>
<text x="1661" y="1051.8" font-size="14.5" fill="#a9abb1" text-anchor="middle">Count</text>
<rect x="1506" y="632" width="352" height="23.5" fill="#0f121b"/>
<path d="M1518 639.5h4l1.5-2h5l1.5 2h4v10.5h-16z" fill="#5d6068"/><circle cx="1526" cy="644.5" r="3.2" fill="#0f121b"/><circle cx="1526" cy="644.5" r="2" fill="#5d6068"/>
<circle cx="1556" cy="642" r="5" fill="none" stroke="#5d6068" stroke-width="2.2"/><rect x="1553.5" y="639.5" width="5" height="5" fill="#5d6068"/><path d="M1559.5 645.5l5.5 5.5" stroke="#5d6068" stroke-width="2.6"/>
<path d="M1582 636v16M1574 644h16" stroke="#5d6068" stroke-width="1.8"/><path d="M1582 635.5l-3 3h6zM1582 652.5l-3-3h6zM1573.5 644l3-3v6zM1590.5 644l-3-3v6z" fill="#5d6068"/>
<rect x="1598.5" y="636.5" width="15" height="15" fill="none" stroke="#5d6068" stroke-width="2" stroke-dasharray="2.5 2"/>
<ellipse cx="1630.5" cy="641.5" rx="7.5" ry="4.8" fill="none" stroke="#5d6068" stroke-width="1.8"/><path d="M1625.5 645c-1 2 0 3 2 3M1626 648l-1 3" fill="none" stroke="#5d6068" stroke-width="1.5"/>
<rect x="1654.5" y="636.5" width="14.5" height="14.5" fill="#5d6068"/><path d="M1661.75 639.5v8.5M1657.5 643.75h8.5" stroke="#0f121b" stroke-width="2.2"/>
<rect x="1678.5" y="636.5" width="14.5" height="14.5" fill="#5d6068"/><path d="M1681.5 643.75h8.5" stroke="#0f121b" stroke-width="2.2"/>
<path d="M1702.5 640.5v-4h4M1713.5 636.5h4v4M1717.5 647.5v4h-4M1706.5 651.5h-4v-4" fill="none" stroke="#5d6068" stroke-width="1.5"/><path d="M1705 639l10 10M1715 639l-10 10" stroke="#5d6068" stroke-width="1.4"/>
<path d="M1734 636.5l8.5 7.5h-2.5v7h-4v-4.5h-4v4.5h-4v-7h-2.5z" fill="#5d6068"/>
<rect x="1758" y="638" width="2.5" height="2" fill="#5d6068"/><rect x="1762" y="638" width="2.5" height="2" fill="#5d6068"/><circle cx="1768" cy="639" r="2.2" fill="#5d6068"/><rect x="1767" y="642.5" width="2" height="2.5" fill="#5d6068"/><rect x="1767" y="647" width="2" height="2.5" fill="#5d6068"/>
<path d="M1782 644l4-3.5h12v7h-12z" fill="#c8c9cc"/>
<path d="M1806 641l3.5-3h12.5v6h-12.5z" fill="#5d6068"/><path d="M1806 648l3.5-3h12.5v6h-12.5z" fill="#5d6068"/>
<rect x="1838" y="636" width="16" height="16" fill="#3d9df2"/><g fill="#ffffff"><rect x="1841" y="641" width="1.3" height="8"/><rect x="1844" y="644" width="1.3" height="5"/><rect x="1847" y="641" width="1.3" height="8"/><rect x="1850" y="644" width="1.3" height="5"/><circle cx="1841.6" cy="638.8" r="0.8"/><circle cx="1844.6" cy="638.8" r="0.8"/><circle cx="1847.6" cy="638.8" r="0.8"/><circle cx="1850.6" cy="638.8" r="0.8"/></g>
<path d="M1348.5 755.5v14M1341.5 762.5h14" stroke="#000" stroke-width="5" stroke-linecap="round" opacity="0.5"/><path d="M1348.5 756v13M1342 762.5h13" stroke="#fff" stroke-width="3.4" stroke-linecap="round"/><path d="M1348.5 757v11M1343 762.5h11" stroke="#000" stroke-width="1.1"/>
<defs><linearGradient id="mb" x1="0" x2="1" y1="0" y2="0"><stop offset="0" stop-color="#b3d1e7"/><stop offset="0.58" stop-color="#b3d3e8"/><stop offset="0.72" stop-color="#d3dee9"/><stop offset="1" stop-color="#e2e5ea"/></linearGradient></defs>
<rect x="0" y="0" width="1920" height="22" fill="url(#mb)"/>
<path d="M27.6 6.1c.7-.9 1.2-2 1.1-3.2-1 .1-2.3.7-3 1.6-.6.7-1.2 1.9-1 3 1.1.1 2.2-.6 2.9-1.4zM28.7 7.8c-1.6-.1-2.9.9-3.7.9-.8 0-1.9-.9-3.2-.8-1.6 0-3.1 1-4 2.4-1.7 3-.4 7.4 1.2 9.8.8 1.2 1.8 2.5 3 2.4 1.2 0 1.7-.8 3.1-.8 1.5 0 1.9.8 3.2.8 1.3 0 2.1-1.2 2.9-2.4.9-1.3 1.3-2.6 1.3-2.7 0 0-2.5-1-2.6-3.9 0-2.4 2-3.6 2.1-3.7-1.2-1.7-3-1.9-3.3-2z" fill="#0a1424" transform="translate(7.3,-0.4) scale(0.82)"/>
<text x="54.5" y="16" font-size="14.25" fill="#0b1a2e" font-weight="bold">Chrome</text>
<text x="127.5" y="16" font-size="14.5" fill="#0b1a2e">Archivo</text>
<text x="194" y="16" font-size="14.5" fill="#0b1a2e">Editar</text>
<text x="250" y="16" font-size="14.5" fill="#0b1a2e">Ver</text>
<text x="290" y="16" font-size="14.5" fill="#0b1a2e">Historial</text>
<text x="362" y="16" font-size="14.5" fill="#0b1a2e">Marcadores</text>
<text x="457" y="16" font-size="14.5" fill="#0b1a2e">Usuarios</text>
<text x="532" y="16" font-size="14.5" fill="#0b1a2e">Ventana</text>
<text x="603" y="16" font-size="14.5" fill="#0b1a2e">Ayuda</text>
<rect x="1480.5" y="4" width="17" height="11" rx="2" fill="none" stroke="#1a2230" stroke-width="1.5"/><rect x="1483" y="6.5" width="3" height="6" fill="#1a2230"/>
<g fill="#1a2230" transform="translate(1519,10)"><path d="M-4.5 -6l4.5 3-4.5 3-4.5-3z"/><path d="M4.5 -6l4.5 3-4.5 3-4.5-3z"/><path d="M-4.5 0l4.5 3-4.5 3-4.5-3z"/><path d="M4.5 0l4.5 3-4.5 3-4.5-3z"/><path d="M0 4.5l4 2.6-4 2.6-4-2.6z"/></g>
<path d="M1541 15V4h17v11h-3" fill="none" stroke="#1a2230" stroke-width="1.4"/><path d="M1541 15h3" stroke="#1a2230" stroke-width="1.4"/><path d="M1549.5 12l5 6h-10z" fill="#1a2230"/>
<path d="M1577 7l6 6-3 3V4l3 3-6 6" fill="none" stroke="#7a8290" stroke-width="1.2"/>
<g fill="none" stroke="#1a2230" stroke-width="2" stroke-linecap="round"><path d="M1600.5 8.5a13 13 0 0 1 18 0"/><path d="M1603.5 11.5a8.5 8.5 0 0 1 12 0"/><path d="M1606.5 14.3a4 4 0 0 1 6 0"/></g><circle cx="1609.5" cy="17" r="1.5" fill="#1a2230"/>
<path d="M1630 8h3l4-4v13l-4-4h-3z" fill="#8a909a"/><g fill="none" stroke="#8a909a" stroke-width="1.1"><path d="M1640 7.5a4 4 0 0 1 0 6"/><path d="M1643 5.5a7 7 0 0 1 0 10"/><path d="M1646 3.5a10 10 0 0 1 0 14"/></g>
<text x="1661" y="15.2" font-size="12.5" fill="#1a2230">100 %</text>
<rect x="1700.5" y="5" width="19" height="10.5" rx="2" fill="none" stroke="#1a2230" stroke-width="1.4"/><rect x="1720.5" y="8" width="2" height="4.5" fill="#1a2230"/><rect x="1702.5" y="7" width="15" height="6.5" fill="#1a2230"/><path d="M1711 5.5l-4.5 5.5h3.5l-1.5 4 4.5-5.5h-3.5z" fill="#dfe4ea" stroke="#dfe4ea" stroke-width="0.6"/>
<text x="1740" y="15.8" font-size="13.75" fill="#1a2230">Vie 18:10</text>
<circle cx="1824.5" cy="9.5" r="4.6" fill="none" stroke="#1a2230" stroke-width="1.6"/><path d="M1828 13l4.5 4.5" stroke="#1a2230" stroke-width="1.8" stroke-linecap="round"/>
<defs><radialGradient id="siri" cx="0.5" cy="0.5" r="0.5"><stop offset="0" stop-color="#f0f4ff"/><stop offset="0.3" stop-color="#c070e0"/><stop offset="0.65" stop-color="#4a6ad8"/><stop offset="0.85" stop-color="#2a3a8a"/><stop offset="1" stop-color="#1a1a40"/></radialGradient></defs><circle cx="1859" cy="11" r="8" fill="url(#siri)"/><path d="M1853.5 14c2-3 3.5-7 6.5-8 2 0 3 1.5 3 3.5" fill="none" stroke="#ff8ad8" stroke-width="1.4" opacity="0.85"/><path d="M1855 9c2 1 5 4 7 8" fill="none" stroke="#7ee0ff" stroke-width="1.2" opacity="0.8"/>
<g fill="#1a2230"><circle cx="1880.5" cy="6" r="1.3"/><circle cx="1880.5" cy="11" r="1.3"/><circle cx="1880.5" cy="16" r="1.3"/><rect x="1883.5" y="5" width="14" height="2"/><rect x="1883.5" y="10" width="14" height="2"/><rect x="1883.5" y="15" width="14" height="2"/></g>
<rect x="0" y="22" width="1920" height="43" fill="#dadde2"/>
<rect x="0" y="22" width="1920" height="0.8" fill="#aeb4b8"/><rect x="0" y="22.8" width="1920" height="1" fill="#eceeee"/>
<circle cx="19" cy="44" r="6" fill="#fe5f57" stroke="#e0443e" stroke-width="0.5"/>
<circle cx="39" cy="44" r="6" fill="#febc2e" stroke="#dea123" stroke-width="0.5"/>
<circle cx="59" cy="44" r="6" fill="#28c840" stroke="#1aab29" stroke-width="0.5"/>
<path d="M547 65a8 8 0 0 0 8-8V39a8 8 0 0 1 8-8h225a8 8 0 0 1 8 8v18a8 8 0 0 0 8 8z" fill="#fbfcf9"/>
<rect x="90" y="40" width="16" height="16" fill="#1f9bef"/><rect x="92.2" y="43.1" width="4" height="4" fill="#ffffff"/><path d="M99.5 45a2.1 2.1 0 0 1 2.1 -2.1v4.2a2.1 2.1 0 0 1 -2.1 -2.1z" fill="#ffffff"/><circle cx="102.3" cy="45" r="1.9" fill="#4fd0f5"/><path d="M92.2 51h5.3" stroke="#d8f4ff" stroke-width="1.6"/><circle cx="101.6" cy="51.2" r="2.4" fill="#ffffff"/><circle cx="101.6" cy="51.2" r="0.8" fill="#4fb8f0"/>
<rect x="568" y="40" width="16" height="16" fill="#1f9bef"/><rect x="570.2" y="43.1" width="4" height="4" fill="#ffffff"/><path d="M577.5 45a2.1 2.1 0 0 1 2.1 -2.1v4.2a2.1 2.1 0 0 1 -2.1 -2.1z" fill="#ffffff"/><circle cx="580.3" cy="45" r="1.9" fill="#4fd0f5"/><path d="M570.2 51h5.3" stroke="#d8f4ff" stroke-width="1.6"/><circle cx="579.6" cy="51.2" r="2.4" fill="#ffffff"/><circle cx="579.6" cy="51.2" r="0.8" fill="#4fb8f0"/>
<text x="114.6" y="52" font-size="12.5" fill="#3c4043">Dash</text>
<text x="592.5" y="52" font-size="12.5" fill="#3c4043">Dash</text>
<text x="353" y="52" font-size="12.5" fill="#3c4043">Dash App Gallery</text>
<circle cx="337" cy="47.5" r="7" fill="#3c4043"/><path d="M331.5 45.5c1.5-.5 3 .5 3.5 2s-1 2.5-.5 4 1.5 1.5 1.5 2.5M340 41.8c-.5 1.5.5 2.5 2 3M343.8 48c-1.5 0-3 .5-3.5 2s-.5 2.5-2 3" fill="none" stroke="#dee1e6" stroke-width="1.5" stroke-linecap="round"/>
<path d="M297.5 44l8 8M305.5 44l-8 8" stroke="#3c4043" stroke-width="1.6"/>
<path d="M536.8 44l8 8M544.8 44l-8 8" stroke="#3c4043" stroke-width="1.6"/>
<path d="M776 44l8 8M784 44l-8 8" stroke="#3c4043" stroke-width="1.6"/>
<rect x="317" y="38" width="1" height="20" fill="#9aa0a6"/>
<path d="M818 42.2v11.6M812.2 48h11.6" stroke="#25282c" stroke-width="2.1"/>
<rect x="0" y="65" width="1920" height="36.4" fill="#fcfdfa"/><rect x="0" y="101.4" width="1920" height="1.2" fill="#101118" opacity="0.6"/>
<rect x="108.5" y="69" width="1690" height="28" rx="14" fill="#f1f3f4"/>
<path d="M29 83H16M22 77l-6 6 6 6" fill="none" stroke="#a9adb1" stroke-width="1.8"/>
<path d="M47 83h13M54 77l6 6-6 6" fill="none" stroke="#a9adb1" stroke-width="1.8"/>
<path d="M92 80.5a6.3 6.3 0 1 0 0.6 4.5" fill="none" stroke="#5f6368" stroke-width="1.8"/><path d="M93.5 75.5v6.5h-6.5z" fill="#5f6368"/>
<rect x="122" y="81.5" width="8" height="7" rx="0.8" fill="#5f6368"/><path d="M123.8 81.5v-2.2a2.2 2.2 0 0 1 4.4 0v2.2" fill="none" stroke="#5f6368" stroke-width="1.5"/>
<text x="142" y="87.8" font-size="15.4" fill="#202124">dash-gallery.plotly.host<tspan fill="#5f6368">/dash-manufacture-spc-dashboard/</tspan></text>
<path d="M1781 75.5l2.1 4.6 5 .5-3.8 3.3 1.1 4.9-4.4-2.6-4.4 2.6 1.1-4.9-3.8-3.3 5-.5z" fill="none" stroke="#5f6368" stroke-width="1.5" stroke-linejoin="round"/>
<rect x="1819" y="78" width="10" height="13" fill="#c8cbce"/><path d="M1821 84l6 5M1827 84l-6 5" stroke="#6f7377" stroke-width="1"/><path d="M1813 75h9l3 14h-12z" fill="#4285f4"/><text x="1815" y="85" font-size="7" font-weight="bold" fill="#fff">G</text>
<rect x="1843" y="76" width="1" height="15" fill="#c5c7ca"/>
<path d="M1857.5 88.5c0-3 3-5 8.5-5s8.5 2 8.5 5a8.5 5 0 0 1 -17 0z" fill="#1a2246"/><rect x="1864.2" y="82" width="3.6" height="3" fill="#b58a70"/><ellipse cx="1866" cy="79.2" rx="3.1" ry="4.2" fill="#c29277"/><path d="M1862.8 78.5c0-3 1.3-4.5 3.2-4.5s3.2 1.5 3.2 4.5c-.6-1.5-1.6-2-3.2-2s-2.6.5-3.2 2z" fill="#4a3428"/><path d="M1863.2 80.5c.5 2.2 1.5 3 2.8 3s2.3-.8 2.8-3" fill="none" stroke="#5a4030" stroke-width="0.9"/>
<g fill="#5f6368"><circle cx="1898.5" cy="77.5" r="1.6"/><circle cx="1898.5" cy="83.5" r="1.6"/><circle cx="1898.5" cy="89.5" r="1.6"/></g>
</svg></body></html>
